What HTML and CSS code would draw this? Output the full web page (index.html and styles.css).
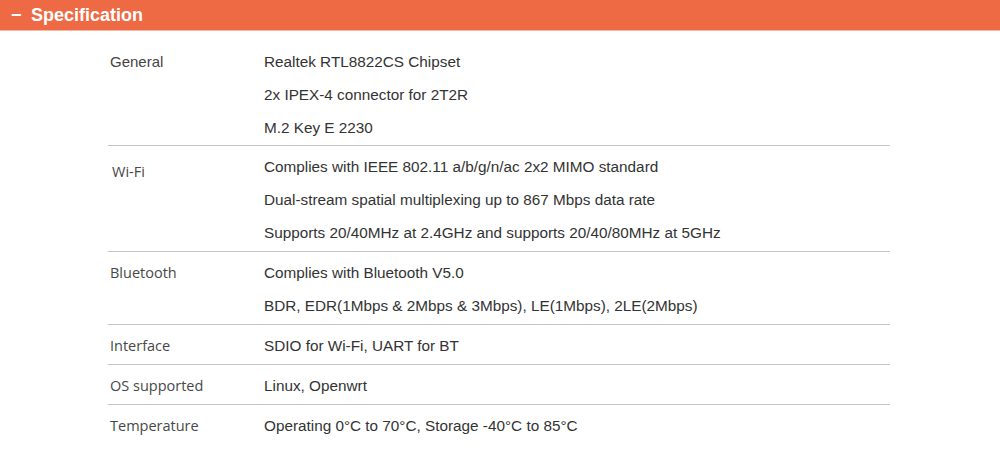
FILE: index.html
```html
<!DOCTYPE html>
<html lang="en">
<head>
    <meta charset="UTF-8">
    <title>Specification</title>
    <link rel="stylesheet" href="styles.css">
</head>
<body>

<div class="spec-header">
    <span class="toggle">&minus;</span>
    <h2>Specification</h2>
</div>

<div class="spec-table">
    <div class="spec-row">
        <div class="spec-label arial">General</div>
        <div class="spec-values">
            <p>Realtek RTL8822CS Chipset</p>
            <p>2x IPEX-4 connector for 2T2R</p>
            <p>M.2 Key E 2230</p>
        </div>
    </div>

    <div class="spec-row">
        <div class="spec-label low">Wi-Fi</div>
        <div class="spec-values">
            <p>Complies with IEEE 802.11 a/b/g/n/ac 2x2 MIMO standard</p>
            <p>Dual-stream spatial multiplexing up to 867 Mbps data rate</p>
            <p>Supports 20/40MHz at 2.4GHz and supports 20/40/80MHz at 5GHz</p>
        </div>
    </div>

    <div class="spec-row">
        <div class="spec-label">Bluetooth</div>
        <div class="spec-values">
            <p>Complies with Bluetooth V5.0</p>
            <p>BDR, EDR(1Mbps &amp; 2Mbps &amp; 3Mbps), LE(1Mbps), 2LE(2Mbps)</p>
        </div>
    </div>

    <div class="spec-row">
        <div class="spec-label">Interface</div>
        <div class="spec-values">
            <p>SDIO for Wi-Fi, UART for BT</p>
        </div>
    </div>

    <div class="spec-row">
        <div class="spec-label">OS supported</div>
        <div class="spec-values">
            <p>Linux, Openwrt</p>
        </div>
    </div>

    <div class="spec-row">
        <div class="spec-label">Temperature</div>
        <div class="spec-values">
            <p>Operating 0°C to 70°C, Storage -40°C to 85°C</p>
        </div>
    </div>
</div>

</body>
</html>
```

FILE: styles.css
```css
* {
    box-sizing: border-box;
}

body {
    margin: 0;
    background-color: #fff;
    font-family: 'Liberation Sans', Arial, sans-serif;
}

.spec-header {
    display: flex;
    align-items: center;
    height: 31px;
    padding-left: 11px;
    background-color: #ee6a45;
    border-bottom: 1px solid #f6b9a5;
    color: #fff;
}

.spec-header .toggle {
    width: 20px;
    font-size: 18px;
    font-weight: bold;
}

.spec-header h2 {
    margin: 0;
    font-size: 18px;
    font-weight: bold;
}

.spec-table {
    margin: 10px 110px 0 108px;
}

.spec-row {
    display: flex;
    padding: 4px 0 2px;
    border-bottom: 1px solid #c4c4c4;
}

.spec-row:first-child {
    padding-bottom: 1px;
}

.spec-row:last-child {
    border-bottom: none;
}

.spec-label {
    width: 156px;
    padding-left: 2px;
    font-family: 'Open Sans', 'Noto Sans', sans-serif;
    font-size: 14.5px;
    line-height: 33px;
    color: #484848;
}

.spec-label.arial {
    font-family: 'Liberation Sans', Arial, sans-serif;
    font-size: 15px;
    color: #444;
}

.spec-label.low {
    padding-top: 5px;
    padding-left: 4px;
}

.spec-values {
    flex: 1;
}

.spec-values p {
    margin: 0;
    font-size: 15.3px;
    line-height: 33px;
    color: #333;
}
```
